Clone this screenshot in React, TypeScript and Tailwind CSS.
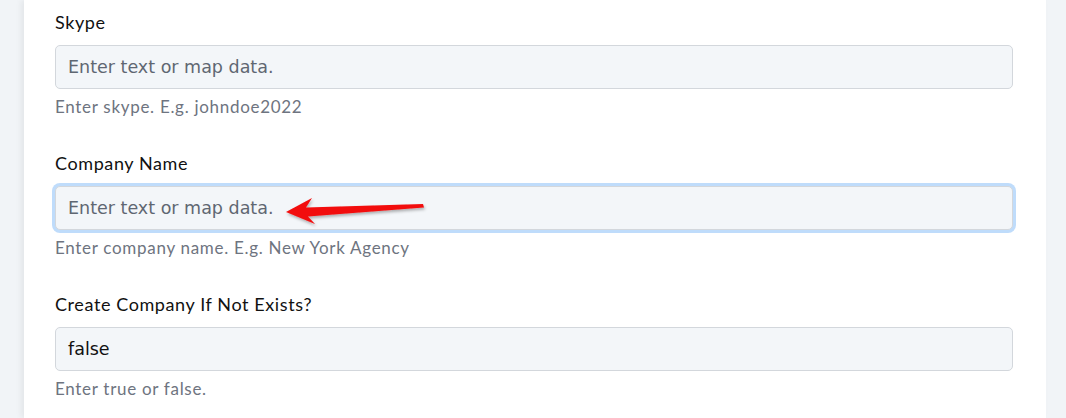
import React from 'react';

type Field = {
  label: string;
  value?: string;
  placeholder?: string;
  help: string;
  focused?: boolean;
};

const fields: Field[] = [
  { label: 'Skype', placeholder: 'Enter text or map data.', help: 'Enter skype. E.g. johndoe2022' },
  { label: 'Company Name', placeholder: 'Enter text or map data.', help: 'Enter company name. E.g. New York Agency', focused: true },
  { label: 'Create Company If Not Exists?', value: 'false', help: 'Enter true or false.' },
];

const Arrow = () => (
  <svg
    className="absolute left-[226px] top-[9px] pointer-events-none"
    width="150"
    height="36"
    viewBox="0 0 150 36"
  >
    <defs>
      <filter id="arrowShadow" x="-10%" y="-40%" width="120%" height="180%">
        <feDropShadow dx="1" dy="2" stdDeviation="1.5" floodColor="#000" floodOpacity="0.3" />
      </filter>
    </defs>
    {/* tip at left, tail to the right */}
    <polygon
      points="5,17 31,3 25,12.5 142,9 143,12.5 27,21.5 34,29"
      fill="#f20d0d"
      filter="url(#arrowShadow)"
    />
  </svg>
);

const FormField: React.FC<{ field: Field }> = ({ field }) => (
  <div className="mb-[32px]">
    <div
      className="text-[18px] leading-[24px] tracking-[0.6px] text-[#111] mb-[11px]"
      style={{ fontFamily: 'Lato, sans-serif' }}
    >
      {field.label}
    </div>
    <div className="relative">
      <div
        className={`h-[44px] rounded-[5px] border border-[#d3d7dc] bg-[#f3f6f9] flex items-center px-[12px] text-[17.5px] ${
          field.focused ? 'ring-[3px] ring-[#bfdcfb]' : ''
        }`}
        style={{ fontFamily: '"DejaVu Sans", sans-serif' }}
      >
        {field.value ? (
          <span className="text-[#111]">{field.value}</span>
        ) : (
          <span className="text-[#5f6772]">{field.placeholder}</span>
        )}
      </div>
      {field.focused && <Arrow />}
    </div>
    <div
      className="mt-[6px] text-[17px] leading-[24px] tracking-[0.7px] text-[#6e7480]"
      style={{ fontFamily: 'Lato, sans-serif' }}
    >
      {field.help}
    </div>
  </div>
);

export default function App() {
  return (
    <div className="w-[1066px] h-[418px] bg-[#f1f4f7] pl-[24px] pr-[20px] overflow-hidden">
      <div className="h-full bg-white shadow-[-3px_0_6px_rgba(0,0,0,0.06)] pl-[31px] pr-[33px] pt-[10px]">
        {fields.map((f) => (
          <FormField key={f.label} field={f} />
        ))}
      </div>
    </div>
  );
}
